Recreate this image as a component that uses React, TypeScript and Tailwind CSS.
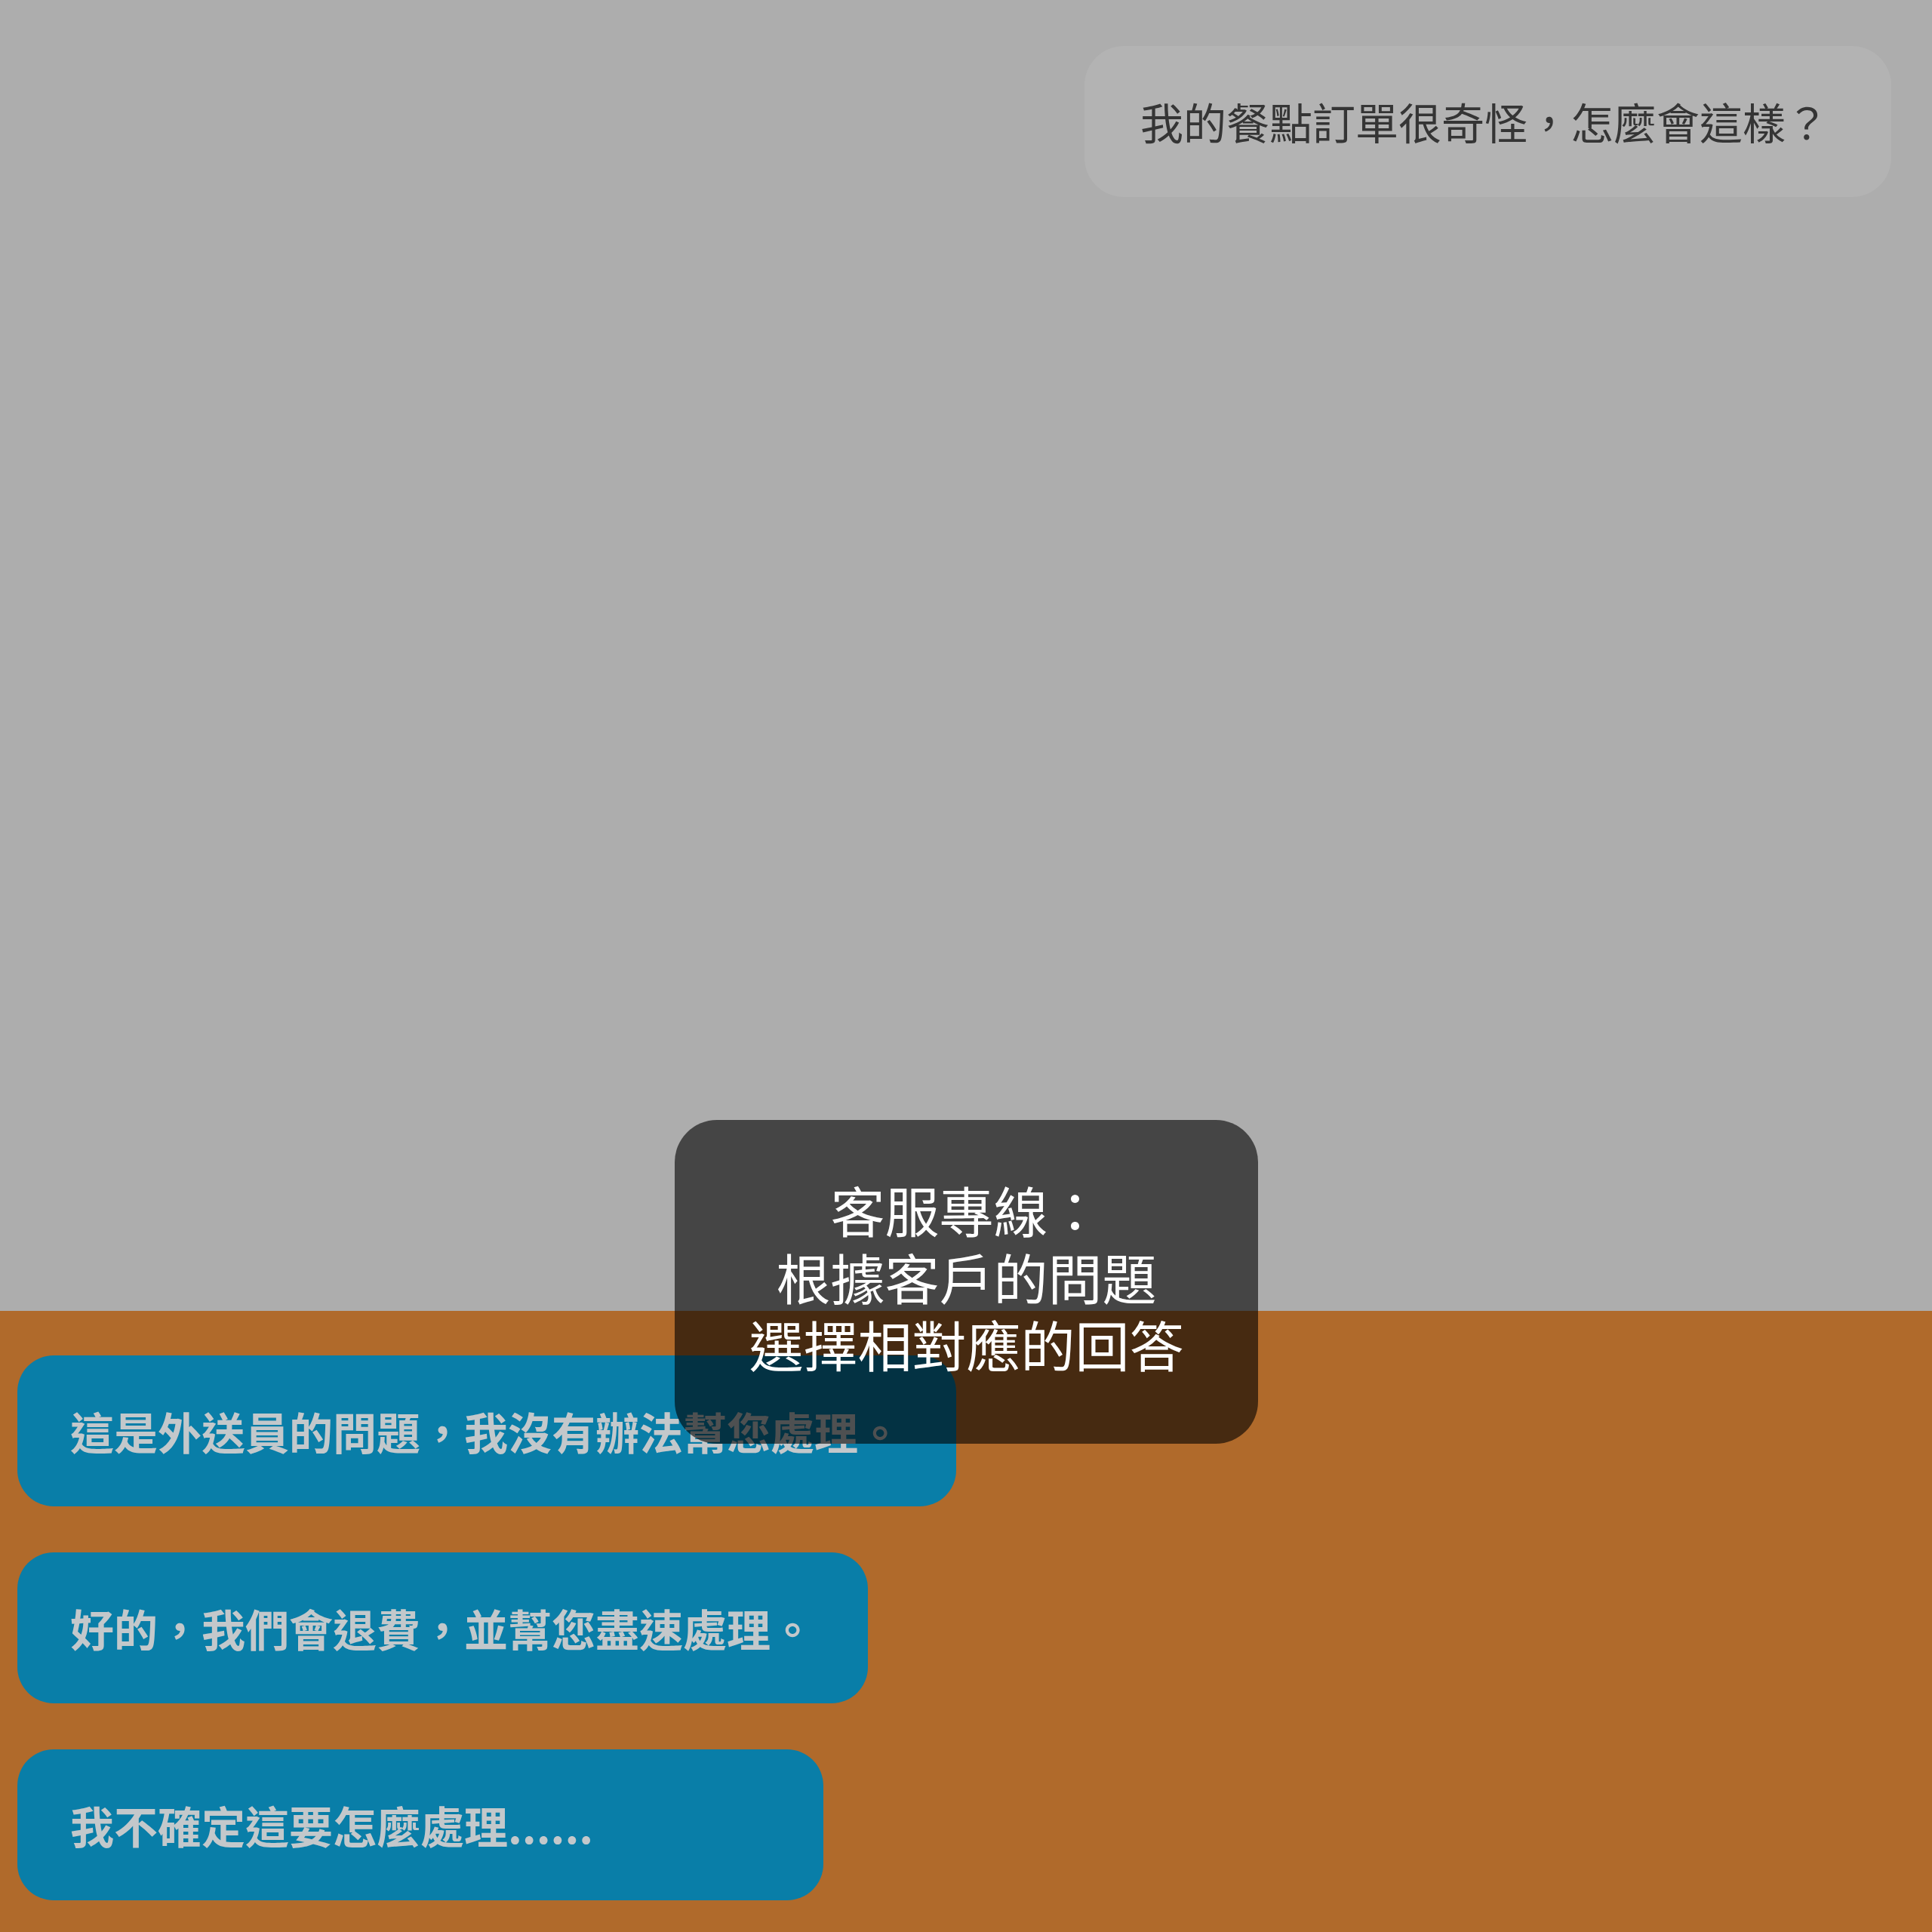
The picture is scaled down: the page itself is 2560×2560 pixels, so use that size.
import React from 'react';

const replies = [
  { text: '這是外送員的問題，我沒有辦法幫您處理。', width: 'w-[1244px]' },
  { text: '好的，我們會退費，並幫您盡速處理。', width: 'w-[1127px]' },
  { text: '我不確定這要怎麼處理......', width: 'w-[1068px]' },
];

const cjk = "font-['Noto_Sans_CJK_TC','Noto_Sans_CJK_SC',sans-serif]";

const ReplyButton: React.FC<{ text: string; width: string }> = ({ text, width }) => (
  <button
    className={`${width} h-[200px] rounded-[48px] bg-[#097ea8] pl-[70px] text-left text-[58px] font-bold text-[#c3c8cb] ${cjk}`}
  >
    {text}
  </button>
);

const App: React.FC = () => {
  return (
    <div className="relative flex h-[2560px] w-[2560px] flex-col overflow-hidden">
      {/* 聊天區 */}
      <div className="flex h-[1737px] justify-end bg-[#adadad] pr-[54px] pt-[61px]">
        <div
          className={`flex h-[200px] w-[1069px] items-center rounded-[52px] bg-[#b3b3b3] pl-[74px] text-[57px] text-[#353535] ${cjk}`}
        >
          我的餐點訂單很奇怪，怎麼會這樣？
        </div>
      </div>

      {/* 回答選項 */}
      <div className="flex flex-1 flex-col gap-[61px] bg-[#b06a2b] pl-[23px] pt-[59px]">
        {replies.map((r) => (
          <ReplyButton key={r.text} {...r} />
        ))}
      </div>

      {/* 提示框 */}
      <div
        className={`absolute left-[894px] top-[1484px] flex h-[429px] w-[773px] items-center justify-center rounded-[56px] bg-black/60 pb-[16px] text-center text-[72px] leading-[89px] text-white ${cjk}`}
      >
        <p>
          客服專線：
          <br />
          根據客戶的問題
          <br />
          選擇相對應的回答
        </p>
      </div>
    </div>
  );
};

export default App;
